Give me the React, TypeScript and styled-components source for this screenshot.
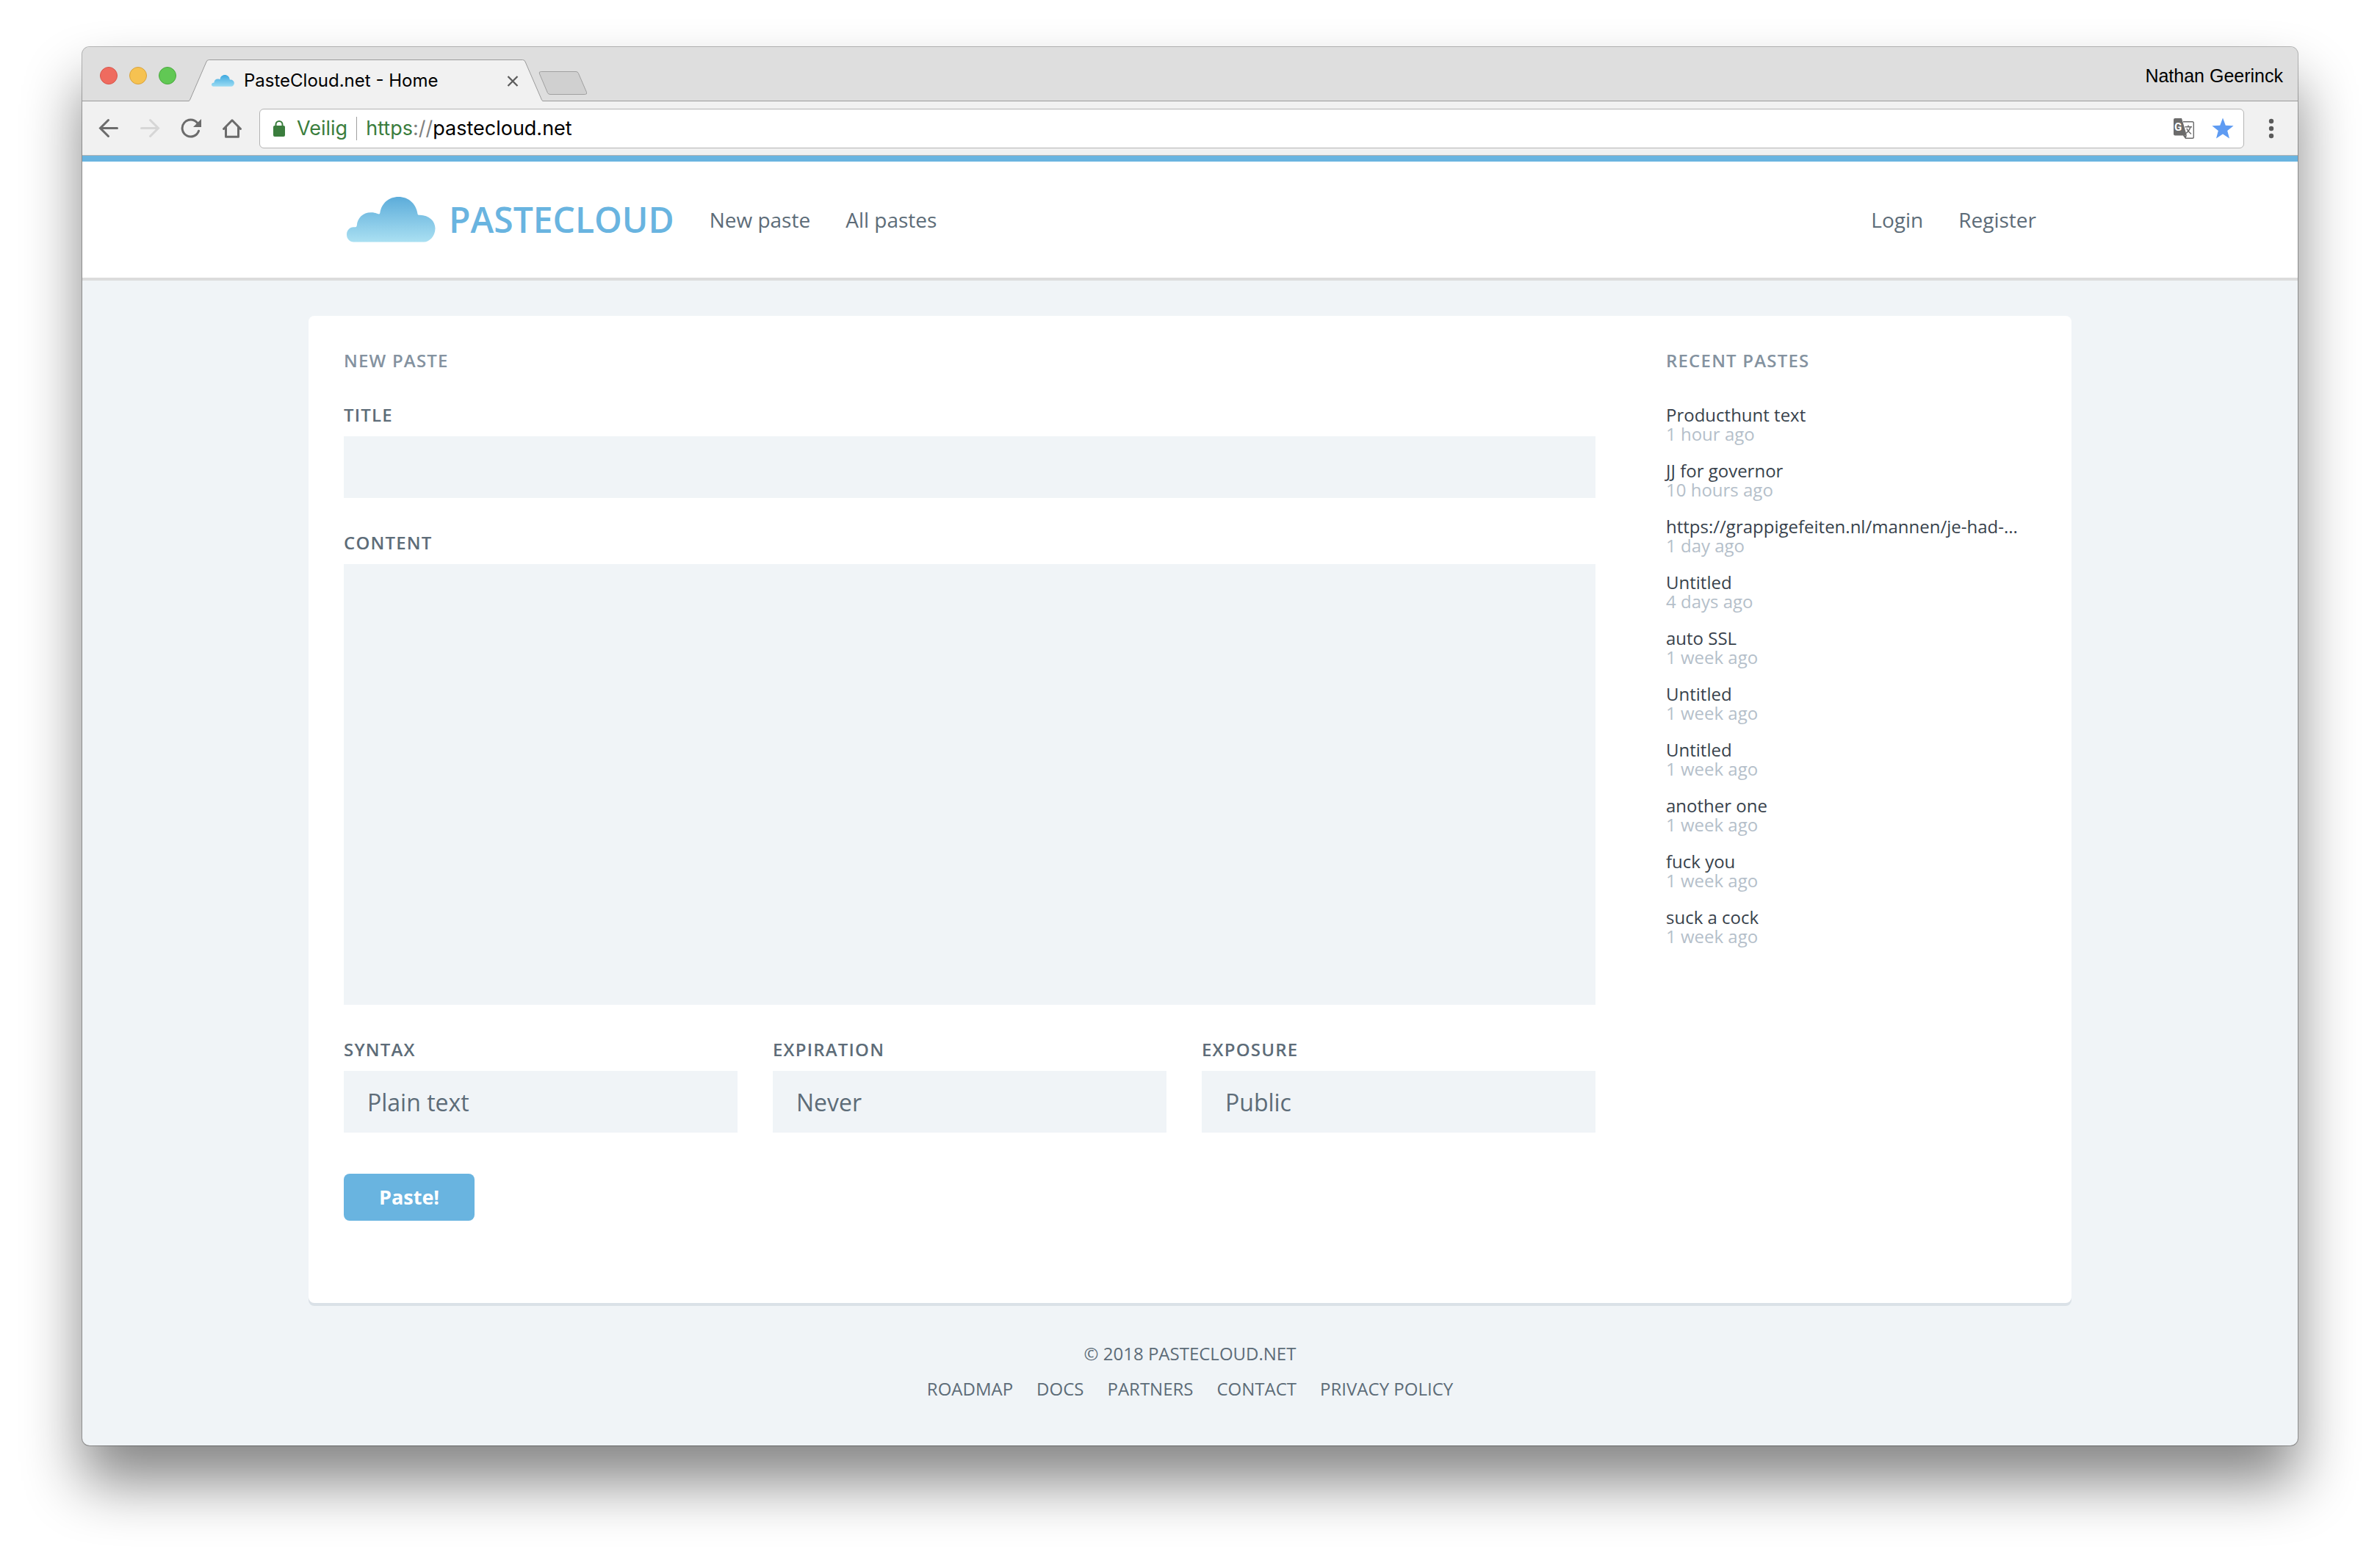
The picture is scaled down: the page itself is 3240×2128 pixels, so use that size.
import React, { useId } from "react";
import styled, { createGlobalStyle } from "styled-components";

const color = {
  brand: "#69b4e0",
  page: "#f0f4f7",
  text: "#38424c",
  muted: "#5d6c78",
  heading: "#8492a0",
  faint: "#b5bfca",
  chrome: "#f1f1f1",
  icon: "#6b6b6b",
  secure: "#3a7d3d",
};

const uiFont = `Inter, "Liberation Sans", sans-serif`;
const pageFont = `"Open Sans", "Noto Sans", sans-serif`;

const GlobalStyle = createGlobalStyle`
  *, *::before, *::after { box-sizing: border-box; }
  body { margin: 0; background: #fff; font-family: ${pageFont}; }
  button, input, textarea, select { font: inherit; color: inherit; border: 0; border-radius: 0; margin: 0; }
  a { color: inherit; text-decoration: none; }
  svg { display: block; }
`;

const Desktop = styled.div`
  min-height: 100vh;
  padding: 64px 112px 160px;
  overflow: hidden;
`;

const BrowserWindow = styled.div`
  display: flex;
  flex-direction: column;
  border-radius: 10px;
  background: ${color.page};
  box-shadow: 0 0 0 1px rgba(0, 0, 0, 0.28), 0 50px 80px rgba(0, 0, 0, 0.48);
`;

/* ---------- browser chrome ---------- */

const TabStrip = styled.div`
  display: flex;
  align-items: flex-end;
  height: 74px;
  padding: 3px 20px 0 24px;
  border-radius: 10px 10px 0 0;
  background: #dedede;
  box-shadow: inset 0 -1px #9b9b9b;
  font-family: ${uiFont};
  font-size: 24px;
  color: #000;
`;

const Lights = styled.div`
  display: flex;
  gap: 16px;
  align-self: center;
  margin-right: 16px;
`;

const Light = styled.button<{ $fill: string; $edge: string }>`
  width: 24px;
  height: 24px;
  padding: 0;
  border: 1px solid ${(p) => p.$edge};
  border-radius: 50%;
  background: ${(p) => p.$fill};
`;

const Tab = styled.div`
  position: relative;
  display: flex;
  align-items: center;
  width: 484px;
  height: 57px;
  padding: 0 32px;
`;

const TabShape = styled.svg`
  position: absolute;
  inset: 0;
  width: 100%;
  height: 100%;
`;

const TabTitle = styled.span`
  position: relative;
  flex: 1;
  margin-left: 13px;
  line-height: 32px;
  white-space: nowrap;
`;

const PlainButton = styled.button`
  position: relative;
  display: grid;
  place-items: center;
  padding: 0;
  background: none;
`;

const NewTab = styled(PlainButton)`
  margin: 0 0 9px -7px;
`;

const Profile = styled.div`
  align-self: center;
  margin-left: auto;
  font-family: "Liberation Sans", Arial, sans-serif;
  font-size: 25px;
  line-height: 32px;
`;

const Toolbar = styled.div`
  display: flex;
  align-items: center;
  height: 74px;
  padding: 0 22px;
  border-bottom: 1px solid #b4b4b4;
  background: ${color.chrome};
`;

const ToolButtons = styled.div`
  display: flex;
  gap: 28px;
`;

const AddressBar = styled.div`
  display: flex;
  align-items: center;
  flex: 1;
  height: 54px;
  margin: 0 23px;
  padding: 0 13px 0 18px;
  border: 1px solid #b4b4b4;
  border-radius: 6px;
  background: #fff;
  font-family: ${uiFont};
  font-size: 27px;
  line-height: 32px;
`;

const Secure = styled.span`
  margin-left: 16px;
  padding-right: 12px;
  border-right: 1px solid #a0a0a0;
  color: ${color.secure};
`;

const Url = styled.span`
  flex: 1;
  margin-left: 12px;
  color: #000;
`;

const UrlScheme = styled.span`
  color: ${color.secure};
`;

const UrlSlashes = styled.span`
  color: #808080;
`;

const AddressActions = styled.div`
  display: flex;
  align-items: center;
  gap: 24px;
`;

/* ---------- site ---------- */

const SiteHeader = styled.header`
  border-top: 8px solid ${color.brand};
  border-bottom: 4px solid #dcdcdc;
  background: #fff;
`;

const Container = styled.div`
  width: 100%;
  max-width: 2400px;
  margin: 0 auto;
`;

const HeaderRow = styled(Container)`
  display: flex;
  align-items: center;
  gap: 48px;
  height: 158px;
  padding: 0 48px;
  font-size: 28px;
  line-height: 40px;
  color: ${color.muted};
`;

const Brand = styled.a`
  display: flex;
  align-items: center;
  gap: 18px;
  padding-left: 4px;
  font-size: 48px;
  font-weight: 600;
  line-height: 64px;
  color: ${color.brand};
`;

const Nav = styled.nav<{ $end?: boolean }>`
  display: flex;
  gap: 48px;
  margin-left: ${(p) => (p.$end ? "auto" : "0")};
`;

const Card = styled(Container)`
  display: grid;
  grid-template-columns: minmax(0, 1fr) 504px;
  gap: 96px;
  margin-top: 48px;
  padding: 48px 48px 112px;
  border-radius: 8px;
  background: #fff;
  box-shadow: 0 4px #dae1e7;
`;

const SectionTitle = styled.h2`
  margin: 0 0 48px;
  font-size: 24px;
  font-weight: 600;
  line-height: 26px;
  letter-spacing: 0.05em;
  color: ${color.heading};
`;

const Form = styled.form`
  display: flex;
  flex-direction: column;
  gap: 48px;
  color: ${color.muted};
`;

const Field = styled.div`
  display: flex;
  flex-direction: column;
  gap: 16px;
`;

const FieldRow = styled.div`
  display: grid;
  grid-template-columns: repeat(3, minmax(0, 1fr));
  gap: 48px;
`;

const Label = styled.label`
  font-size: 24px;
  font-weight: 600;
  line-height: 26px;
  letter-spacing: 0.05em;
`;

const TextInput = styled.input`
  height: 84px;
  padding: 0 32px;
  background: ${color.page};
  font-size: 32px;
`;

const TextArea = styled.textarea`
  height: 600px;
  padding: 24px 32px;
  background: ${color.page};
  font-size: 32px;
  resize: none;
`;

const Select = styled.select`
  height: 84px;
  padding: 0 32px;
  appearance: none;
  background: ${color.page};
  font-size: 32px;
`;

const Submit = styled.button`
  align-self: flex-start;
  margin-top: 8px;
  padding: 12px 48px;
  border-radius: 8px;
  background: ${color.brand};
  color: #fff;
  font-size: 27px;
  font-weight: 700;
  line-height: 40px;
`;

const PasteList = styled.ul`
  display: flex;
  flex-direction: column;
  gap: 24px;
  margin: 0;
  padding: 0;
  list-style: none;
  font-size: 24px;
  line-height: 26px;
`;

const PasteLink = styled.a`
  display: block;
  white-space: nowrap;
  color: ${color.text};
`;

const PasteTime = styled.time`
  display: block;
  color: ${color.faint};
`;

const Footer = styled.footer`
  display: flex;
  flex-direction: column;
  align-items: center;
  gap: 22px;
  padding: 56px 0 64px;
  font-size: 24px;
  line-height: 26px;
  color: ${color.muted};
`;

const FooterLinks = styled.nav`
  display: flex;
  gap: 32px;
`;

/* ---------- drawings ---------- */

const CloudSvg = styled.svg`
  position: relative;
  flex: none;
`;

function Cloud({ width, height, from, to }: { width: number; height: number; from: string; to: string }) {
  const id = useId();
  return (
    <CloudSvg width={width} height={height} viewBox="0 0 121 62" aria-hidden="true">
      <defs>
        <linearGradient id={id} x1="0" y1="0" x2="0" y2="1">
          <stop offset="0" stopColor={from} />
          <stop offset="1" stopColor={to} />
        </linearGradient>
      </defs>
      <path
        fill={`url(#${id})`}
        d="M9.5 61.5C4 61.5 0 57 0 51.5C0 45.5 4 41.5 9 41.3C12 41.3 13.3 41.5 13.8 39C14.5 29 22 21.3 33 21.3C37 21.3 39.5 22 42 23C44.5 23.8 45 23.5 45.4 21.5C47.5 9 57 0 70.5 0C84 0 94 9 96.3 22C96.6 24.5 97 24.7 99.5 24.7C112 24.7 120.5 33 120.5 43C120.5 54 112 61.5 105 61.5Z"
      />
    </CloudSvg>
  );
}

const BackIcon = () => (
  <svg width="28" height="28" viewBox="0 0 28 28" fill="none" stroke="currentColor" strokeWidth="3" strokeLinecap="round">
    <path d="M25.5 13.5H3M13.5 2.5L2.5 13.5L13.5 24.5" />
  </svg>
);

const ForwardIcon = () => (
  <svg width="28" height="28" viewBox="0 0 28 28" fill="none" stroke="currentColor" strokeWidth="3" strokeLinecap="round">
    <path d="M2.5 13.5H25M14.5 2.5L25.5 13.5L14.5 24.5" />
  </svg>
);

const ReloadIcon = () => (
  <svg width="28" height="28" viewBox="0 0 28 28">
    <path
      d="M22.5 6.2A11.5 11.5 0 1 0 24.5 17.2"
      fill="none"
      stroke="currentColor"
      strokeWidth="3"
      strokeLinecap="round"
    />
    <path d="M28 1V12H17Z" fill="currentColor" />
  </svg>
);

const HomeIcon = () => (
  <svg width="28" height="28" viewBox="0 0 28 28" fill="none" stroke="currentColor" strokeWidth="3" strokeLinejoin="round" strokeLinecap="round">
    <path d="M2.5 14.5L14 2.8L25.5 14.5M5.5 12.5V25.2H22.5V12.5" />
  </svg>
);

const LockIcon = () => (
  <svg width="16" height="24" viewBox="0 0 16 24" aria-hidden="true">
    <path d="M3.5 9V6.5a4.5 4.5 0 0 1 9 0V9" fill="none" stroke={color.secure} strokeWidth="2" />
    <rect y="8" width="16" height="15" rx="2" fill={color.secure} />
  </svg>
);

const TranslateIcon = () => (
  <svg width="28" height="28" viewBox="0 0 28 28">
    <path d="M13 4.700H25.500A1.800 1.800 0 0 1 27.300 6.500V25.500A1.800 1.800 0 0 1 25.500 27.300H16.500L13.500 23" fill="#fff" stroke={color.icon} strokeWidth="1.4" />
    <path d="M2 0H11L18 23.500H2A2 2 0 0 1 0 21.500V2A2 2 0 0 1 2 0Z" fill={color.icon} />
    <path d="M13 23.500H18L16.500 27.500Z" fill={color.icon} />
    <path d="M15.500 11.800H25M20 9.500V11.800M23 11.800C22 15.500 19.500 18.500 17 20.500M17.800 14C19 17 21.500 19.500 24 21.500" fill="none" stroke={color.icon} strokeWidth="1.5" />
    <text x="1" y="17" fontFamily="Roboto, sans-serif" fontWeight="700" fontSize="15" fill="#fff">G</text>
  </svg>
);

const StarIcon = () => (
  <svg width="30" height="30" viewBox="0 0 30 30">
    <path d="M15 0.500L18.800 10.700L29.600 11.200L21.200 18L24 28.500L15 22.500L6 28.500L8.800 18L0.400 11.200L11.200 10.700Z" fill="#5e9bf2" />
  </svg>
);

const MenuIcon = () => (
  <svg width="28" height="28" viewBox="0 0 28 28" fill="#5a5a5a">
    <circle cx="14" cy="4" r="3.2" />
    <circle cx="14" cy="14" r="3.2" />
    <circle cx="14" cy="24" r="3.2" />
  </svg>
);

const ToolButton = styled(PlainButton)`
  width: 28px;
  height: 28px;
  color: ${color.icon};

  &:disabled {
    color: #d6d6d6;
  }
`;

/* ---------- data ---------- */

const recentPastes = [
  ["Producthunt text", "1 hour ago"],
  ["JJ for governor", "10 hours ago"],
  ["https://grappigefeiten.nl/mannen/je-had-...", "1 day ago"],
  ["Untitled", "4 days ago"],
  ["auto SSL", "1 week ago"],
  ["Untitled", "1 week ago"],
  ["Untitled", "1 week ago"],
  ["another one", "1 week ago"],
  ["fuck you", "1 week ago"],
  ["suck a cock", "1 week ago"],
];

const options = [
  { id: "syntax", label: "SYNTAX", value: "Plain text" },
  { id: "expiration", label: "EXPIRATION", value: "Never" },
  { id: "exposure", label: "EXPOSURE", value: "Public" },
];

const footerLinks = ["ROADMAP", "DOCS", "PARTNERS", "CONTACT", "PRIVACY POLICY"];

function BrowserChrome() {
  return (
    <>
      <TabStrip>
        <Lights>
          <Light $fill="#ef6b5f" $edge="#d8564b" aria-label="Close window" />
          <Light $fill="#f6c251" $edge="#d9a33c" aria-label="Minimize window" />
          <Light $fill="#61c854" $edge="#4aa93e" aria-label="Zoom window" />
        </Lights>
        <Tab>
          <TabShape viewBox="0 0 484 57" preserveAspectRatio="none" aria-hidden="true">
            <path d="M0 57C1.500 56.500 2 56 2.500 55L25 3Q26 0.500 28.500 0.500H455.500Q458 0.500 459 3L481.500 55C482 56 482.500 56.500 484 57Z" fill={color.chrome} />
            <path d="M0 56.500C1.500 56.500 2 56 2.500 55L25 3Q26 0.500 28.500 0.500H455.500Q458 0.500 459 3L481.500 55C482 56 482.500 56.500 484 56.500" fill="none" stroke="#9b9b9b" />
          </TabShape>
          <Cloud width={31} height={16} from="#3fa9e0" to="#9bdcf3" />
          <TabTitle>PasteCloud.net - Home</TabTitle>
          <PlainButton aria-label="Close tab">
            <svg width="20" height="20" viewBox="0 0 20 20" stroke="#5a5a5a" strokeWidth="2.2">
              <path d="M3.500 4L16.500 17M16.500 4L3.500 17" />
            </svg>
          </PlainButton>
        </Tab>
        <NewTab aria-label="New tab">
          <svg width="67" height="32" viewBox="0 0 67 32">
            <path d="M3.500 0.500H51Q53.500 0.500 54.300 2.500L65.500 28.500Q66.500 31.500 63.500 31.500H16Q13.500 31.500 12.500 29.500L1.300 3Q0.500 0.500 3.500 0.500Z" fill="#d0d0d0" stroke="#a0a0a0" />
          </svg>
        </NewTab>
        <Profile>Nathan Geerinck</Profile>
      </TabStrip>
      <Toolbar>
        <ToolButtons>
          <ToolButton aria-label="Back"><BackIcon /></ToolButton>
          <ToolButton aria-label="Forward" disabled><ForwardIcon /></ToolButton>
          <ToolButton aria-label="Reload"><ReloadIcon /></ToolButton>
          <ToolButton aria-label="Home"><HomeIcon /></ToolButton>
        </ToolButtons>
        <AddressBar>
          <LockIcon />
          <Secure>Veilig</Secure>
          <Url>
            <UrlScheme>https</UrlScheme>
            <UrlSlashes>://</UrlSlashes>pastecloud.net
          </Url>
          <AddressActions>
            <PlainButton aria-label="Translate"><TranslateIcon /></PlainButton>
            <PlainButton aria-label="Bookmark"><StarIcon /></PlainButton>
          </AddressActions>
        </AddressBar>
        <ToolButton aria-label="Menu"><MenuIcon /></ToolButton>
      </Toolbar>
    </>
  );
}

function PasteForm() {
  return (
    <section>
      <SectionTitle>NEW PASTE</SectionTitle>
      <Form onSubmit={(e) => e.preventDefault()}>
        <Field>
          <Label htmlFor="title">TITLE</Label>
          <TextInput id="title" type="text" />
        </Field>
        <Field>
          <Label htmlFor="content">CONTENT</Label>
          <TextArea id="content" />
        </Field>
        <FieldRow>
          {options.map((o) => (
            <Field key={o.id}>
              <Label htmlFor={o.id}>{o.label}</Label>
              <Select id={o.id}>
                <option>{o.value}</option>
              </Select>
            </Field>
          ))}
        </FieldRow>
        <Submit type="submit">Paste!</Submit>
      </Form>
    </section>
  );
}

export default function App() {
  return (
    <Desktop>
      <GlobalStyle />
      <BrowserWindow>
        <BrowserChrome />
        <SiteHeader>
          <HeaderRow>
            <Brand href="#">
              <Cloud width={121} height={62} from="#5cacda" to="#aae0f2" />
              PASTECLOUD
            </Brand>
            <Nav>
              <a href="#">New paste</a>
              <a href="#">All pastes</a>
            </Nav>
            <Nav $end>
              <a href="#">Login</a>
              <a href="#">Register</a>
            </Nav>
          </HeaderRow>
        </SiteHeader>
        <main>
          <Card>
            <PasteForm />
            <aside>
              <SectionTitle>RECENT PASTES</SectionTitle>
              <PasteList>
                {recentPastes.map(([title, time], i) => (
                  <li key={i}>
                    <PasteLink href="#">{title}</PasteLink>
                    <PasteTime>{time}</PasteTime>
                  </li>
                ))}
              </PasteList>
            </aside>
          </Card>
        </main>
        <Footer>
          <div>© 2018 PASTECLOUD.NET</div>
          <FooterLinks>
            {footerLinks.map((l) => (
              <a key={l} href="#">{l}</a>
            ))}
          </FooterLinks>
        </Footer>
      </BrowserWindow>
    </Desktop>
  );
}
